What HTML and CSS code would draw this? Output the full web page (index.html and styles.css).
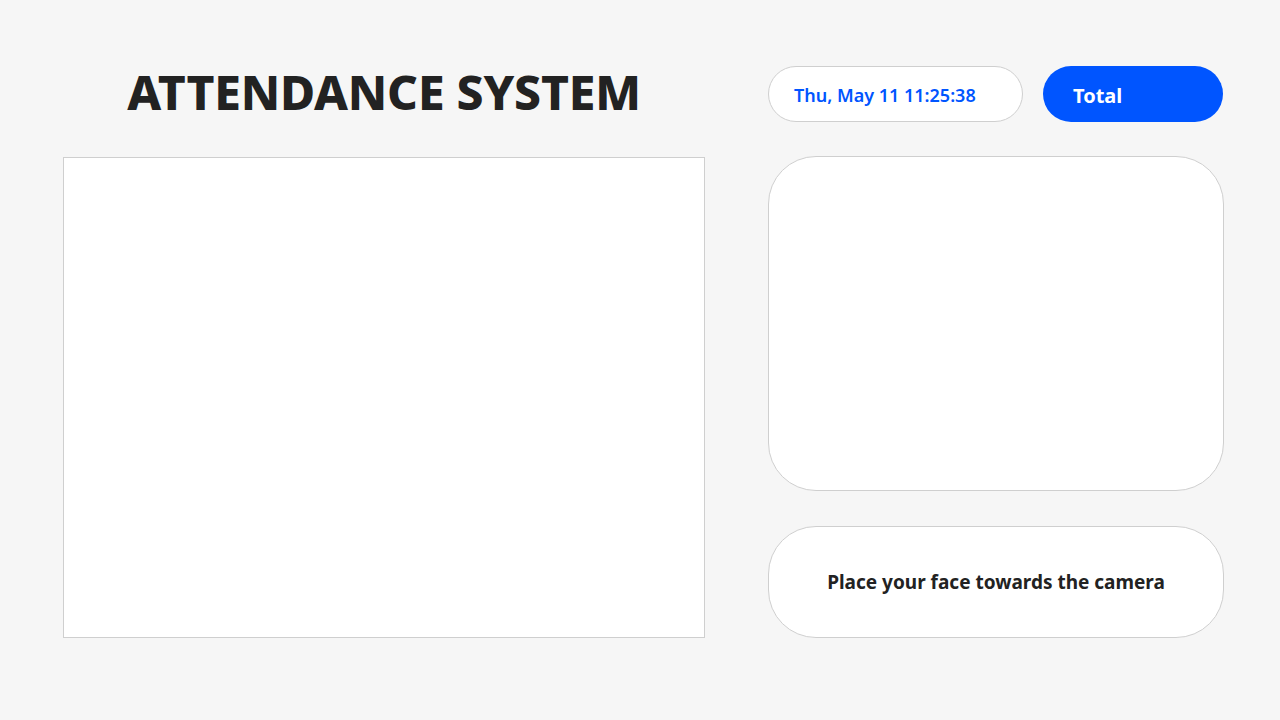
FILE: index.html
```html
<!DOCTYPE html>
<html lang="en">
<head>
<meta charset="utf-8">
<link rel="stylesheet" href="styles.css">
<title>Attendance System</title>
</head>
<body>
<div class="page">
  <section class="left">
    <h1 class="title">ATTENDANCE SYSTEM</h1>
    <div class="camera"></div>
  </section>
  <section class="right">
    <div class="top-row">
      <div class="pill date">Thu, May 11 11:25:38</div>
      <div class="pill total">Total</div>
    </div>
    <div class="card preview"></div>
    <div class="card message">Place your face towards the camera</div>
  </section>
</div>
</body>
</html>
```
FILE: styles.css
```css
html, body {
  margin: 0;
  padding: 0;
  background: #f6f6f6;
  font-family: "Noto Sans", "Noto Sans CJK KR", sans-serif;
  color: #222;
}
.page {
  display: flex;
  padding: 66px 56px 0 63px;
  gap: 63px;
}
.left {
  width: 642px;
  display: flex;
  flex-direction: column;
  align-items: center;
}
.title {
  margin: 0;
  height: 91px;
  line-height: 52px;
  font-size: 48px;
  font-weight: 800;
  letter-spacing: -0.2px;
}
.camera {
  width: 640px;
  height: 479px;
  background: #fff;
  border: 1px solid #cfcfcf;
}
.right {
  width: 456px;
  display: flex;
  flex-direction: column;
}
.top-row {
  display: flex;
  gap: 20px;
  height: 56px;
}
.pill {
  box-sizing: border-box;
  height: 56px;
  border-radius: 28px;
  display: flex;
  align-items: center;
  padding-top: 2px;
  font-size: 19px;
  font-weight: 600;
}
.date {
  width: 255px;
  background: #fff;
  border: 1px solid #cfcfcf;
  color: #0055ff;
  padding-left: 25px;
  font-size: 18px;
}
.total {
  width: 180px;
  background: #0055ff;
  color: #fff;
  font-weight: 700;
  padding-left: 30px;
  font-size: 20px;
}
.card {
  box-sizing: border-box;
  background: #fff;
  border: 1px solid #cfcfcf;
  border-radius: 48px;
}
.preview {
  margin-top: 34px;
  height: 335px;
}
.message {
  margin-top: 35px;
  height: 112px;
  display: flex;
  align-items: center;
  justify-content: center;
  font-size: 19px;
  font-weight: 700;
}
```
